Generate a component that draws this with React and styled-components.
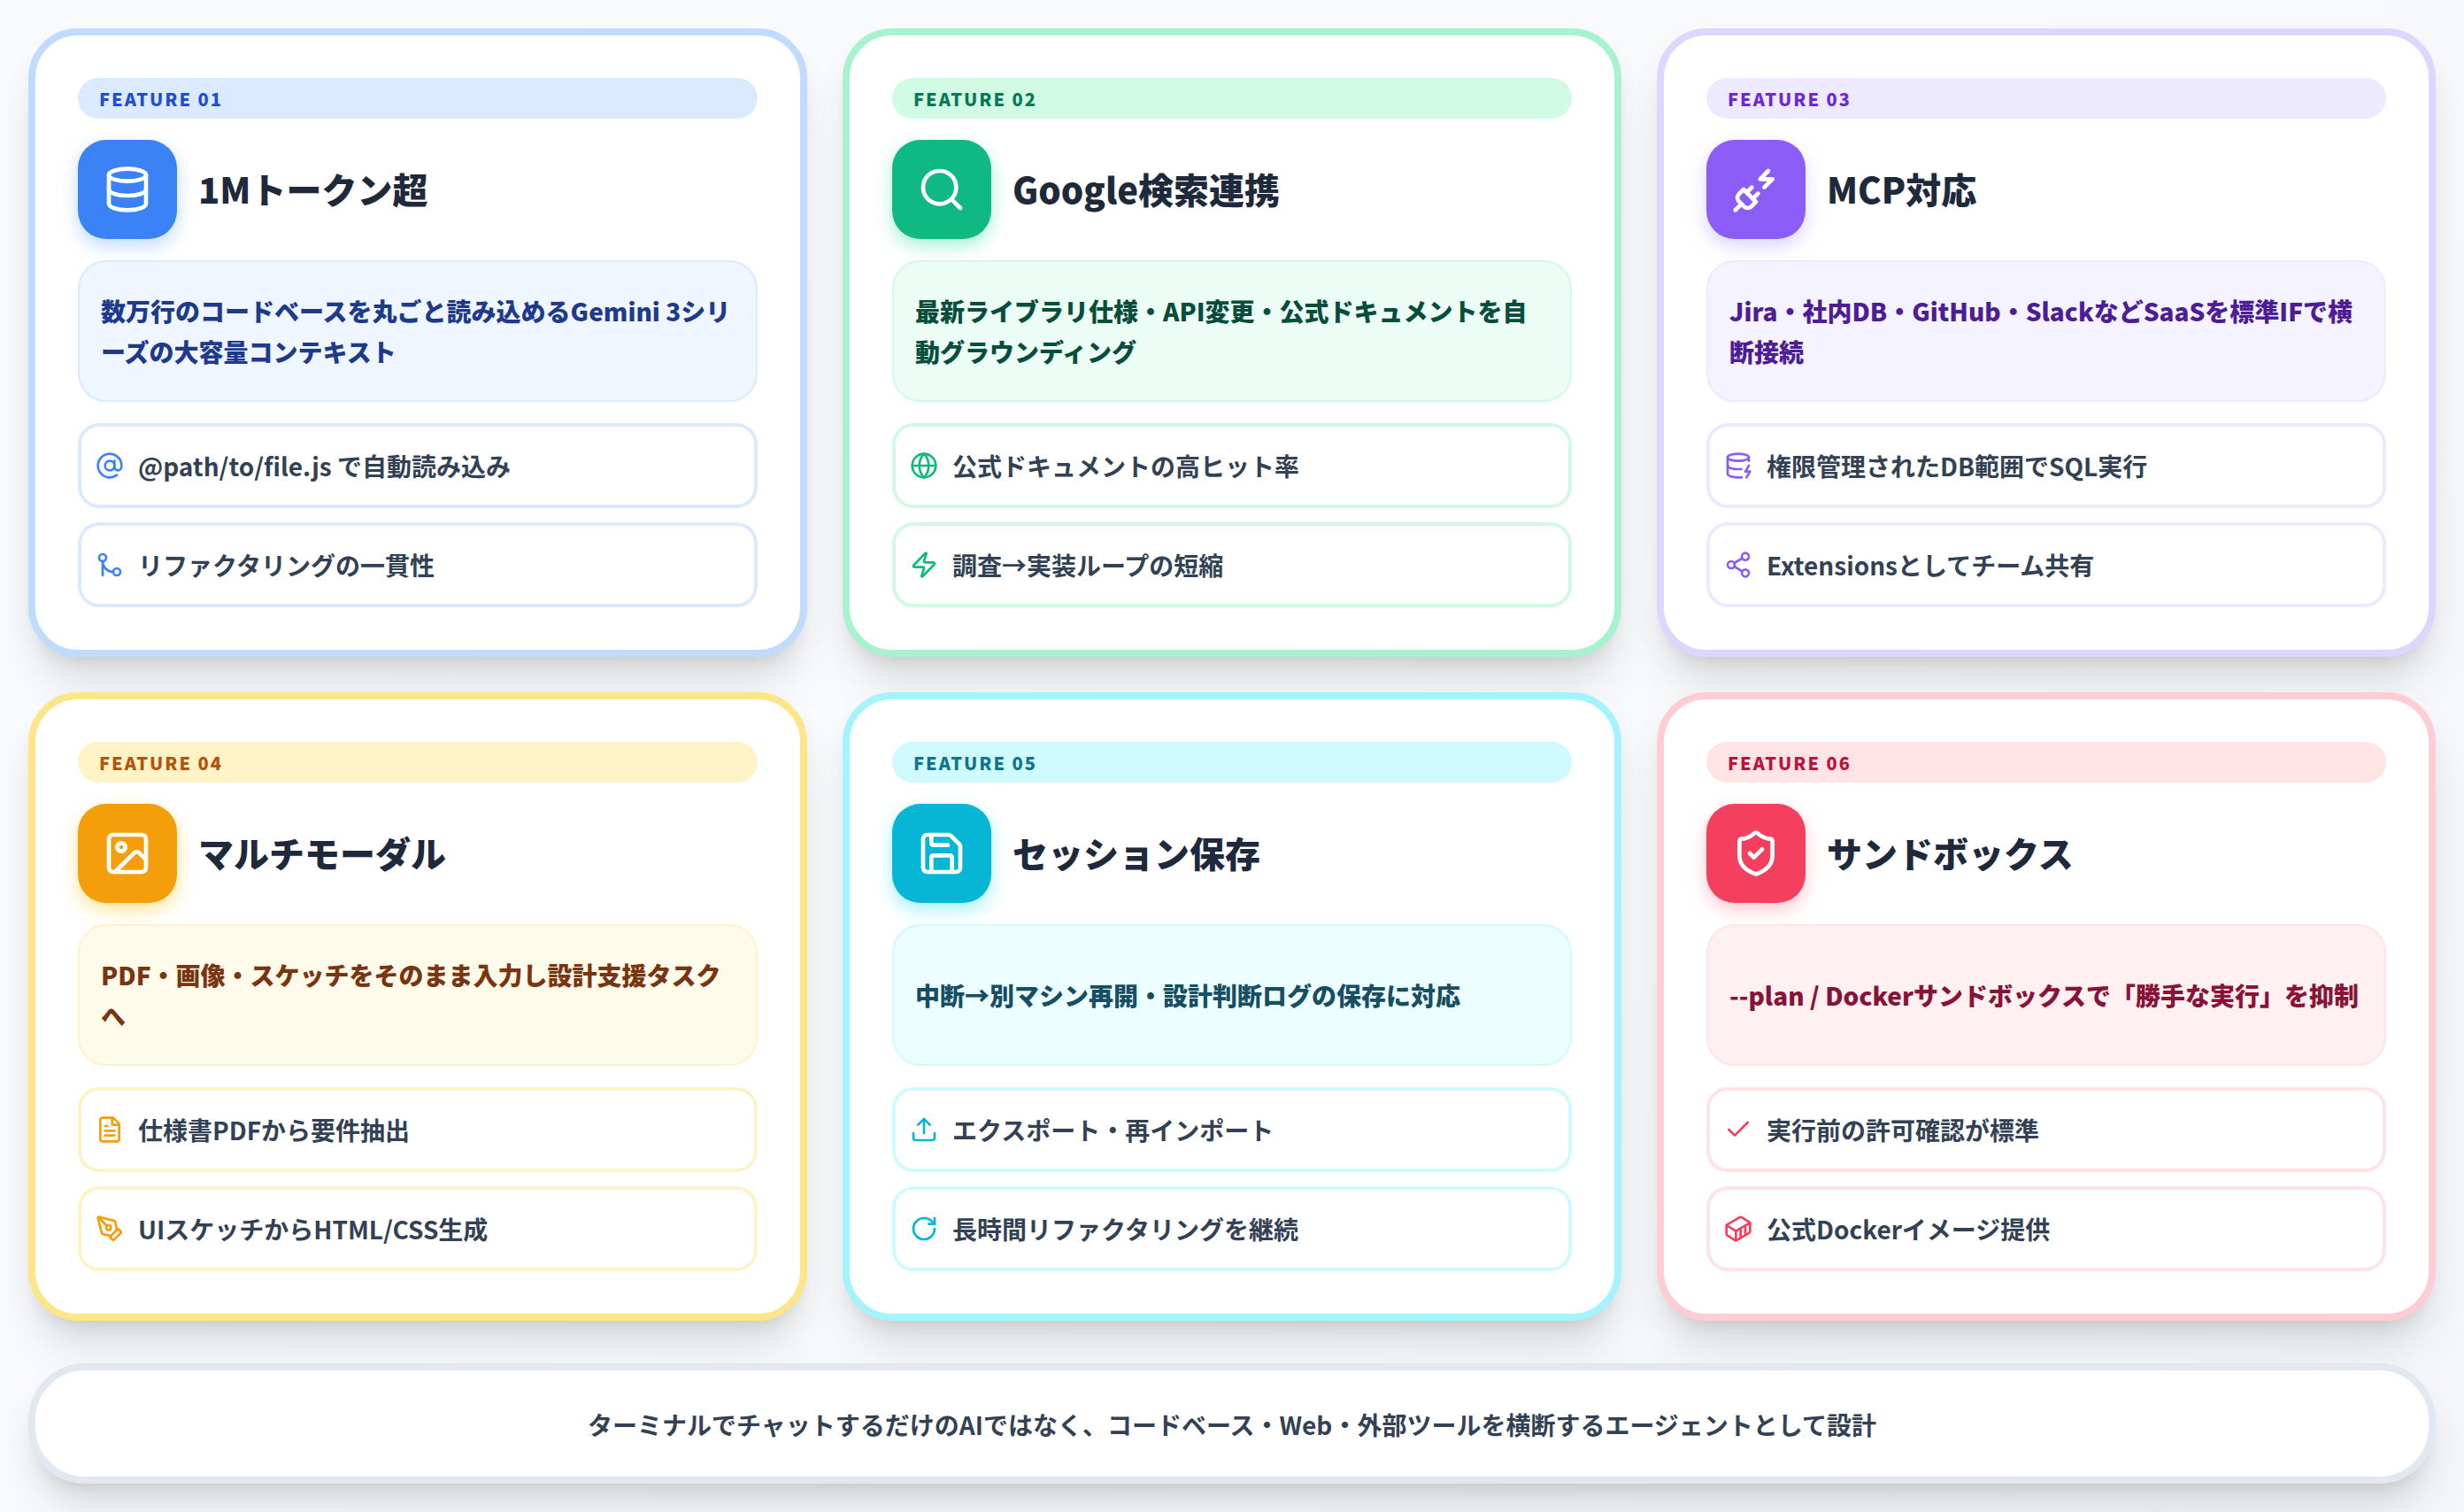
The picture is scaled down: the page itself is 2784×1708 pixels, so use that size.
import React from "react";
import styled, { createGlobalStyle } from "styled-components";
import {
  Database, Search, PlugZap, Image as ImageIcon, Save, ShieldCheck, AtSign, GitMerge, Globe, Zap,
  DatabaseZap, Share2, FileText, PenTool, Upload, RotateCw, Check, Container,
} from "lucide-react";

const Global = createGlobalStyle`
  html, body { margin: 0; padding: 0; }
  body {
    font-family: "Noto Sans CJK JP", "Noto Sans", sans-serif;
    background: linear-gradient(135deg, #f9fbff 0%, #f8fafc 50%, #f4f6f9 100%);
    min-height: 1708px;
    overflow: hidden;
  }
`;

const Page = styled.main`
  box-sizing: border-box;
  width: 2784px;
  height: 1708px;
  padding: 32px;
  display: flex;
  flex-direction: column;
  gap: 48px;
`;

const Grid = styled.section`
  display: grid;
  grid-template-columns: repeat(3, 880px);
  grid-auto-rows: 710px;
  gap: 40px;
`;

const Card = styled.article`
  box-sizing: border-box;
  background: #fff;
  border: 8px solid ${(p) => p.$c.border};
  border-radius: 56px;
  padding: 48px;
  display: flex;
  flex-direction: column;
  box-shadow: 0 40px 50px -10px rgba(0, 0, 0, 0.1), 0 16px 20px -12px rgba(0, 0, 0, 0.1), 0 10px 40px rgba(0, 0, 0, 0.03);
`;

const Pill = styled.div`
  height: 46px;
  line-height: 48px;
  padding: 0 24px;
  border-radius: 23px;
  background: ${(p) => p.$c.pill};
  color: ${(p) => p.$c.pillText};
  font-size: 20px;
  font-weight: 900;
  letter-spacing: 2px;
`;

const Head = styled.header`
  display: flex;
  align-items: center;
  gap: 24px;
  margin-top: 24px;
`;

const IconTile = styled.div`
  width: 112px;
  height: 112px;
  flex: none;
  border-radius: 32px;
  background: ${(p) => p.$c.solid};
  color: #fff;
  display: flex;
  align-items: center;
  justify-content: center;
  box-shadow: 0 8px 20px ${(p) => p.$c.glow};
`;

const Title = styled.h2`
  margin: 0 0 2px;
  font-size: 40px;
  line-height: 56px;
  font-weight: 900;
  color: #1e293b;
`;

const Lead = styled.p`
  box-sizing: border-box;
  margin: 24px 0 0;
  height: 160px;
  padding: 0 24px;
  display: flex;
  align-items: center;
  border: 2px solid ${(p) => p.$c.soft};
  border-radius: 32px;
  background: ${(p) => p.$c.tint};
  color: ${(p) => p.$c.leadText};
  font-size: 28px;
  line-height: 46px;
  font-weight: 900;
`;

const Points = styled.ul`
  list-style: none;
  margin: 24px 0 0;
  padding: 0;
  display: flex;
  flex-direction: column;
  gap: 16px;
`;

const Point = styled.li`
  box-sizing: border-box;
  height: 96px;
  padding: 0 16px;
  display: flex;
  align-items: center;
  gap: 16px;
  border: 4px solid ${(p) => p.$c.soft};
  border-radius: 24px;
  background: #fff;
  color: #334155;
  font-size: 28px;
  line-height: 40px;
  font-weight: 700;
  svg { color: ${(p) => p.$c.solid}; flex: none; }
`;

const Banner = styled.footer`
  box-sizing: border-box;
  height: 136px;
  padding-top: 1px;
  display: flex;
  align-items: center;
  justify-content: center;
  border: 8px solid #e2e8f0;
  border-radius: 64px;
  background: #fff;
  color: #334155;
  font-size: 28px;
  font-weight: 700;
  box-shadow: 0 40px 50px -10px rgba(0, 0, 0, 0.1), 0 16px 20px -12px rgba(0, 0, 0, 0.1), 0 10px 40px rgba(0, 0, 0, 0.03);
`;

const palettes = {
  blue: { border: "#bfdbfe", pill: "#dbeafe", pillText: "#1d4ed8", solid: "#3b82f6", glow: "rgba(147,197,253,.6)", soft: "#dbeafe", tint: "#eff6ff", leadText: "#1e3a8a" },
  green: { border: "#a7f3d0", pill: "#d1fae5", pillText: "#047857", solid: "#10b981", glow: "rgba(110,231,183,.6)", soft: "#d1fae5", tint: "#ecfdf5", leadText: "#064e3b" },
  violet: { border: "#ddd6fe", pill: "#ede9fe", pillText: "#6d28d9", solid: "#8b5cf6", glow: "rgba(196,181,253,.6)", soft: "#ede9fe", tint: "#f5f3ff", leadText: "#4c1d95" },
  amber: { border: "#fde68a", pill: "#fef3c7", pillText: "#b45309", solid: "#f59e0b", glow: "rgba(252,211,77,.6)", soft: "#fef3c7", tint: "#fffbeb", leadText: "#78350f" },
  cyan: { border: "#a5f3fc", pill: "#cffafe", pillText: "#0e7490", solid: "#06b6d4", glow: "rgba(103,232,249,.6)", soft: "#cffafe", tint: "#ecfeff", leadText: "#164e63" },
  rose: { border: "#fecdd3", pill: "#ffe4e6", pillText: "#be123c", solid: "#f43f5e", glow: "rgba(253,164,175,.6)", soft: "#ffe4e6", tint: "#fff1f2", leadText: "#881337" },
};

const features = [
  { no: "01", c: palettes.blue, Icon: Database, title: "1Mトークン超", lead: "数万行のコードベースを丸ごと読み込めるGemini 3シリーズの大容量コンテキスト",
    points: [[AtSign, "@path/to/file.js で自動読み込み"], [GitMerge, "リファクタリングの一貫性"]] },
  { no: "02", c: palettes.green, Icon: Search, title: "Google検索連携", lead: "最新ライブラリ仕様・API変更・公式ドキュメントを自動グラウンディング",
    points: [[Globe, "公式ドキュメントの高ヒット率"], [Zap, "調査→実装ループの短縮"]] },
  { no: "03", c: palettes.violet, Icon: PlugZap, title: "MCP対応", lead: "Jira・社内DB・GitHub・SlackなどSaaSを標準IFで横断接続",
    points: [[DatabaseZap, "権限管理されたDB範囲でSQL実行"], [Share2, "Extensionsとしてチーム共有"]] },
  { no: "04", c: palettes.amber, Icon: ImageIcon, title: "マルチモーダル", lead: "PDF・画像・スケッチをそのまま入力し設計支援タスクへ",
    points: [[FileText, "仕様書PDFから要件抽出"], [PenTool, "UIスケッチからHTML/CSS生成"]] },
  { no: "05", c: palettes.cyan, Icon: Save, title: "セッション保存", lead: "中断→別マシン再開・設計判断ログの保存に対応",
    points: [[Upload, "エクスポート・再インポート"], [RotateCw, "長時間リファクタリングを継続"]] },
  { no: "06", c: palettes.rose, Icon: ShieldCheck, title: "サンドボックス", lead: "--plan / Dockerサンドボックスで「勝手な実行」を抑制",
    points: [[Check, "実行前の許可確認が標準"], [Container, "公式Dockerイメージ提供"]] },
];

export default function App() {
  return (
    <Page>
      <Global />
      <Grid>
        {features.map(({ no, c, Icon, title, lead, points }) => (
          <Card key={no} $c={c}>
            <Pill $c={c}>FEATURE {no}</Pill>
            <Head>
              <IconTile $c={c}><Icon size={56} strokeWidth={2} /></IconTile>
              <Title>{title}</Title>
            </Head>
            <Lead $c={c}>{lead}</Lead>
            <Points>
              {points.map(([PointIcon, text]) => (
                <Point key={text} $c={c}>
                  <PointIcon size={32} strokeWidth={2} />
                  <span>{text}</span>
                </Point>
              ))}
            </Points>
          </Card>
        ))}
      </Grid>
      <Banner>ターミナルでチャットするだけのAIではなく、コードベース・Web・外部ツールを横断するエージェントとして設計</Banner>
    </Page>
  );
}
